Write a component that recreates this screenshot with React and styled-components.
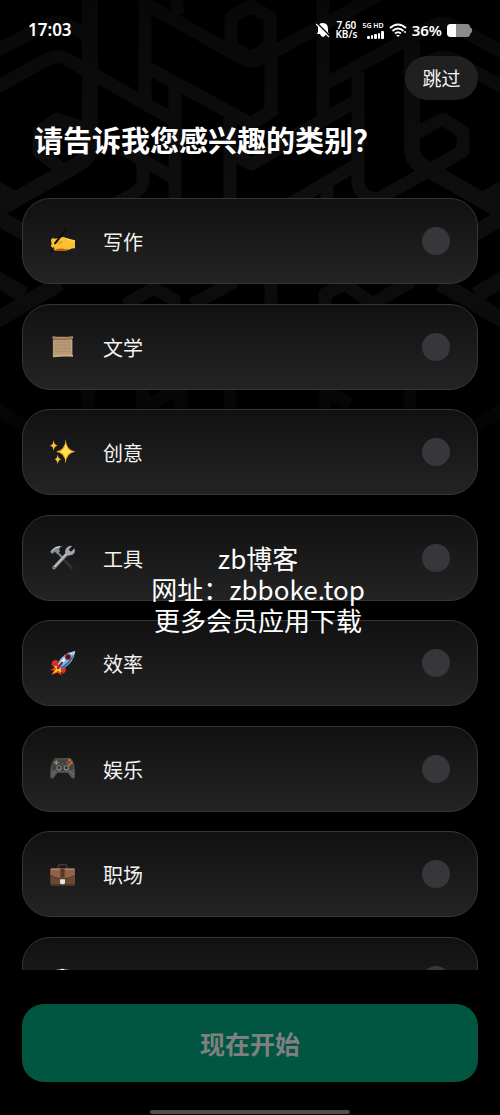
import React, { useState } from "react";
import styled, { createGlobalStyle } from "styled-components";

const GlobalStyle = createGlobalStyle`
  *, *::before, *::after { box-sizing: border-box; }
  body {
    margin: 0;
    background: #000;
    color: #fff;
    font-family: "Noto Sans CJK SC", "Noto Sans", sans-serif;
  }
`;

const Screen = styled.div`
  position: relative;
  isolation: isolate;
  display: flex;
  flex-direction: column;
  height: 100vh;
  overflow: hidden;
  background: #000;
`;

const Backdrop = styled.svg`
  position: absolute;
  z-index: -1;
  top: 0;
  left: 0;
  width: 100%;
  height: auto;
`;

const StatusBar = styled.header`
  display: flex;
  align-items: center;
  justify-content: space-between;
  height: 56px;
  padding: 4px 28px 0;
  flex: none;
  font-family: "Noto Sans", "Noto Sans CJK SC", sans-serif;
  font-weight: 600;
`;

const Clock = styled.time`
  font-size: 17px;
  line-height: 20px;
`;

const StatusGroup = styled.div`
  display: flex;
  align-items: center;
  gap: 5px;
`;

const NetSpeed = styled.div`
  display: flex;
  flex-direction: column;
  align-items: center;
  font-size: 10px;
  line-height: 9px;
`;

const Signal = styled.div`
  display: flex;
  flex-direction: column;
  align-items: flex-end;
  gap: 1px;
  font-size: 7px;
  line-height: 8px;
`;

const Percent = styled.span`
  font-size: 15px;
  line-height: 20px;
`;

const Main = styled.main`
  display: flex;
  flex: 1;
  flex-direction: column;
  min-height: 0;
  padding: 0 22px;
`;

const SkipButton = styled.button`
  align-self: flex-end;
  flex: none;
  width: 73px;
  height: 44px;
  padding: 0;
  border: 0;
  border-radius: 22px;
  background: #202020;
  color: #f4f4f4;
  font: inherit;
  font-size: 19px;
  line-height: 28px;
  cursor: pointer;
`;

const Title = styled.h1`
  flex: none;
  margin: 19px 12px 39px;
  font-size: 29px;
  line-height: 40px;
  font-weight: 700;
`;

const Scroller = styled.div`
  flex: 1;
  min-height: 0;
  overflow-y: auto;
  scrollbar-width: none;
`;

const CategoryList = styled.ul`
  display: flex;
  flex-direction: column;
  justify-content: space-between;
  min-height: 825px;
  margin: 0;
  padding: 0;
  list-style: none;
`;

const CategoryCard = styled.label`
  display: flex;
  align-items: center;
  gap: 27px;
  height: 86px;
  padding: 0 27px;
  border: 1px solid #363636;
  border-radius: 28px;
  background: linear-gradient(#111, #232323);
  color: #f2f2f2;
  font-size: 20px;
  line-height: 30px;
  cursor: pointer;
`;

const CategoryIcon = styled.svg`
  width: 26px;
  height: 26px;
  flex: none;
`;

const CategoryName = styled.span`
  flex: 1;
  padding-top: 2px;
`;

const RoundCheck = styled.input`
  appearance: none;
  flex: none;
  width: 28px;
  height: 28px;
  margin: 0;
  border-radius: 50%;
  background: #37363b;
  cursor: pointer;

  &:checked { background: #00a67e; }
`;

const Footer = styled.footer`
  display: flex;
  flex: none;
  flex-direction: column;
  align-items: center;
  padding: 34px 22px 1px;
`;

const StartButton = styled.button`
  width: 100%;
  height: 78px;
  margin-bottom: 28px;
  padding: 0;
  border: 0;
  border-radius: 22px;
  background: #005640;
  color: #808080;
  font: inherit;
  font-size: 25px;
  line-height: 36px;
  font-weight: 700;
`;

const HomeIndicator = styled.div`
  width: 44%;
  height: 4px;
  border-radius: 2px;
  background: #4e4e4e;
`;

const Watermark = styled.div`
  position: absolute;
  top: 542px;
  right: 0;
  left: 0;
  display: flex;
  flex-direction: column;
  align-items: center;
  padding-left: 16px;
  color: #fff;
  font-size: 26px;
  line-height: 31px;
  pointer-events: none;
`;

function Pattern() {
  return (
    <Backdrop viewBox="0 0 500 480" fill="none" aria-hidden="true">
      <defs>
        <linearGradient id="fade" gradientUnits="userSpaceOnUse" x1="0" y1="0" x2="0" y2="480">
          <stop offset="0" stopColor="#080808" />
          <stop offset="0.4" stopColor="#0e0e0e" />
          <stop offset="0.62" stopColor="#0c0c0c" />
          <stop offset="0.86" stopColor="#050505" />
          <stop offset="1" stopColor="#000" />
        </linearGradient>
      </defs>
      <g stroke="url(#fade)" strokeWidth="16">
        <path d="M90-10V146Q90 156 80 163L-10 214" />
        <path d="M412 42V148Q412 160 422 166L510 216" />
        <path d="M-10 185L12 198M510 185L486 198M-10 213L60 253M510 213L440 253M-10 324L60 283M510 324L440 283" />
        <path d="M-10 275L24 295M510 275L476 295" />
      </g>
      <g stroke="url(#fade)" strokeWidth="13" strokeLinejoin="round">
        <path d="M-10 54L46 25Q57 19 68 25L88 36" />
        <path d="M-10 91L46 60Q57 53 68 60L176 121" />
        <path d="M323 85L432 26Q443 20 454 26L510 56" />
        <path d="M405 77L432 60Q443 54 454 60L510 91" />
        <path d="M145-10V106" />
        <path d="M177-10V14M175 86V205" />
        <path d="M148 5L242 58Q251 64 262 58L395-14" />
        <path d="M251 6L270 17V46L251 58L231 46V17Z" />
        <path d="M148 68L251 124L276 108M271 55V112M323-10V124M274 148L358 100" />
        <path d="M230 117V205M229 151L251 164L290 142" />
        <path d="M358 72V184Q361 198 378 199L430 170L463 151V132L443 119L418 132" />
        <path d="M84 128L57 119L39 132V152L62 169" />
        <path d="M123 149L176 179M143 160V181Q143 188 133 194L95 216" />
        <path d="M288 205L358 164M327 183V205" />
        <path d="M125 305L154 288L174 300V320M192 305L235 281M271 281V320M325 320V294L345 284L372 304L412 281" />
        <path d="M88 380V420M143 380V420M150 404L181 388V420M230 380V420M325 380V420M330 392L350 404M410 380V420M-10 405L30 430M510 405L470 430" />
      </g>
    </Backdrop>
  );
}

function WritingHand() {
  return (
    <>
      <path d="M3 37C3 31 9 29 15 32L29 30Q40 23 49 31L61 35Q71 36 75 37V61Q65 61 57 65Q42 70 29 66Q16 71 13 65Q5 65 7 58Q0 55 5 48Z" fill="#fbc02f" />
      <path d="M15 47Q28 40 37 42Q29 46 24 51" fill="none" stroke="#d98a1c" strokeWidth="2" />
      <path d="M13 66Q24 60 32 62Q41 61 45 64Q56 63 59 65Q41 71 29 68Q18 70 13 66Z" fill="#b95d14" />
      <path d="M49 32Q61 36 74 39" fill="none" stroke="#ffd75c" strokeWidth="4" />
      <path d="M48 5L15 46" stroke="#0c0e10" strokeWidth="6" strokeLinecap="round" />
      <path d="M11 60L2 72" stroke="#0c0e10" strokeWidth="4" strokeLinecap="round" />
    </>
  );
}

function Scroll() {
  return (
    <>
      <path d="M10 12H66V64H10Z" fill="#b99a74" />
      <path d="M14 25H62M14 34H62M14 43H62M14 52H62" stroke="#a5855f" strokeWidth="2" strokeDasharray="12 2 7 1" />
      <path d="M7 7Q38 10 69 7V14Q39 18 8 15Z" fill="#ae8d68" />
      <path d="M8 15Q39 18 66 14" fill="none" stroke="#5f4630" strokeWidth="2" />
      <path d="M8 64Q38 61 69 62V68Q39 66 9 70Z" fill="#cdb087" />
      <path d="M10 17V63M66 17V62" stroke="#dec29a" strokeWidth="2" />
    </>
  );
}

function Sparkles() {
  return (
    <>
      <path d="M47 1Q49 34 76 38Q49 41 47 74Q45 41 18 38Q45 34 47 1Z" fill="#f1ae24" />
      <path d="M47 13Q50 34 66 38Q50 41 47 62Q44 41 29 38Q44 35 47 13Z" fill="#ffe34f" />
      <path d="M11 3Q12 18 23 20Q12 21 11 36Q10 21 0 20Q10 18 11 3ZM23 46Q24 59 34 61Q24 63 23 77Q22 63 13 61Q22 59 23 46Z" fill="#f5c636" />
    </>
  );
}

function Tools() {
  return (
    <>
      <path d="M20 22L65 69" stroke="#2f3032" strokeWidth="9" strokeLinecap="round" />
      <path d="M21 21L42 42" stroke="#8e9498" strokeWidth="5" />
      <path d="M2 19Q15 0 38 4Q28 7 27 13L30 19L22 27L15 20L6 27L0 20Z" fill="#868d93" />
      <path d="M5 18Q17 5 30 5" fill="none" stroke="#d4dadd" strokeWidth="3" />
      <path d="M12 68L53 24" stroke="#878d92" strokeWidth="10" strokeLinecap="round" />
      <path d="M13 66L54 22" stroke="#c3c9cd" strokeWidth="4" strokeLinecap="round" />
      <path d="M46 25Q42 8 60 2L66 3L56 14L63 20L74 10Q78 29 61 31L52 32Z" fill="#a2a8ad" />
      <circle cx="13" cy="67" r="2" fill="#30363a" />
    </>
  );
}

function Rocket() {
  return (
    <>
      <path d="M18 44L3 42L13 53L0 60L13 62L3 75L23 68L34 76L34 65L43 60L31 47Z" fill="#f23b16" />
      <path d="M21 49L13 47L18 57L7 72L25 62L33 68L35 57Z" fill="#ffc727" />
      <path d="M25 32Q11 26 4 40L21 47ZM47 52Q51 66 38 72L32 56Z" fill="#df2d27" />
      <path d="M22 43Q37 8 75 4Q72 42 34 58Z" fill="#81b8df" />
      <path d="M27 42Q43 13 72 7Q51 22 32 48Z" fill="#dbf3ff" />
      <path d="M34 57Q65 41 74 7Q61 36 31 53Z" fill="#28699b" />
      <path d="M63 7Q70 4 76 4L72 17Z" fill="#a6d2eb" />
      <circle cx="54" cy="21" r="10" fill="#bd2b35" />
      <circle cx="54" cy="21" r="6" fill="#202436" />
      <path d="M36 38L24 54" stroke="#9d1f29" strokeWidth="7" strokeLinecap="round" />
    </>
  );
}

function Gamepad() {
  return (
    <>
      <path d="M13 8Q21 4 29 7H47Q58 3 64 9Q75 20 75 63Q72 71 65 66L53 50H23L10 67Q1 72 1 60Q0 23 13 8Z" fill="#555954" />
      <path d="M14 10Q20 7 29 11H47Q57 7 63 12Q69 20 70 37L60 45H16L5 38Q7 18 14 10Z" fill="#40443f" />
      <path d="M5 56L18 43M71 56L57 43" stroke="#787c75" strokeWidth="3" />
      <path d="M12 20H27M19 13V27" stroke="#8c918a" strokeWidth="4" />
      <circle cx="27" cy="36" r="8" fill="#858b83" />
      <circle cx="49" cy="36" r="8" fill="#858b83" />
      <circle cx="27" cy="35" r="5" fill="#353934" />
      <circle cx="49" cy="35" r="5" fill="#353934" />
      <g fill="#e0602f">
        <circle cx="58" cy="13" r="4" />
        <circle cx="64" cy="20" r="4" />
        <circle cx="51" cy="20" r="3" fill="#9a5238" />
        <circle cx="58" cy="26" r="4" />
      </g>
      <circle cx="38" cy="24" r="2" fill="#d54b35" />
    </>
  );
}

function Briefcase() {
  return (
    <>
      <path d="M25 25V15Q26 11 32 11H44Q50 11 51 15V25" fill="none" stroke="#573a2b" strokeWidth="4" />
      <rect x="1" y="22" width="74" height="52" rx="4" fill="#6b4835" />
      <path d="M1 27Q1 22 6 22H70Q75 22 75 27V42Q58 52 38 52Q17 51 1 42Z" fill="#916449" />
      <path d="M2 43Q18 54 38 54Q59 53 74 43" fill="none" stroke="#4d3326" strokeWidth="2" />
      <path d="M4 25H72" stroke="#b2896c" strokeWidth="3" />
      <path d="M31 23H44V50H31Z" fill="#59382a" />
      <path d="M30 55H45V67Q38 75 30 67Z" fill="#e7e5df" />
      <path d="M2 72H74" stroke="#3d291f" strokeWidth="3" />
    </>
  );
}

function ChefHat() {
  return (
    <>
      <path d="M12 42Q0 16 18 9Q24 7 28 8Q37 2 46 8Q56 6 62 14Q74 30 62 44V72H17Z" fill="#f4f4f4" />
      <path d="M18 60H61M30 32V57M48 32V57" stroke="#bdbdbd" strokeWidth="3" />
    </>
  );
}

const categories = [
  { id: "writing", name: "写作", Icon: WritingHand },
  { id: "literature", name: "文学", Icon: Scroll },
  { id: "creative", name: "创意", Icon: Sparkles },
  { id: "tools", name: "工具", Icon: Tools },
  { id: "efficiency", name: "效率", Icon: Rocket },
  { id: "fun", name: "娱乐", Icon: Gamepad },
  { id: "career", name: "职场", Icon: Briefcase },
  { id: "food", name: "美食", Icon: ChefHat },
];

function StatusIcons() {
  return (
    <StatusGroup>
      <svg width="14" height="16" viewBox="0 0 14 16" aria-hidden="true">
        <path d="M7 1Q12 1 12 7V10L13 12H1L2 10V6Q2 1 7 1ZM4 12H10Q9 15 7 15T4 12Z" fill="#fff" />
        <path d="M1 1L14 14" stroke="#000" strokeWidth="1.5" />
        <path d="M0 2L13 15" stroke="#fff" strokeWidth="1.2" />
      </svg>
      <NetSpeed>
        <span>7.60</span>
        <span>KB/s</span>
      </NetSpeed>
      <Signal>
        5G HD
        <svg width="17" height="8" viewBox="0 0 17 8" fill="#fff" aria-hidden="true">
          <rect x="0" y="5" width="3" height="3" rx="1" />
          <rect x="4" y="4" width="2" height="4" rx="1" />
          <rect x="7" y="3" width="3" height="5" rx="1" />
          <rect x="11" y="2" width="2" height="6" rx="1" />
          <rect x="14" y="0" width="3" height="8" rx="1" />
        </svg>
      </Signal>
      <svg width="18" height="14" viewBox="0 0 18 14" fill="none" stroke="#fff" strokeWidth="2" aria-hidden="true">
        <path d="M1 5Q9-2 17 5M3.5 8Q9 3 14.5 8M6 10.5Q9 8 12 10.5" />
        <path d="M7 12L9 14L11 12Z" fill="#fff" stroke="none" />
        <circle cx="16" cy="9" r="1" fill="#fff" stroke="none" />
      </svg>
      <Percent>36%</Percent>
      <svg width="25" height="13" viewBox="0 0 25 13" aria-hidden="true">
        <path d="M4 0H20Q23 0 23 3L25 5V8L23 10Q23 13 20 13H4Q0 13 0 9V4Q0 0 4 0Z" fill="#8b8b8b" />
        <path d="M9 0H4Q0 0 0 4V9Q0 13 4 13H9Z" fill="#fff" />
      </svg>
    </StatusGroup>
  );
}

export default function App() {
  const [selected, setSelected] = useState([]);

  const toggle = (id) =>
    setSelected((list) => (list.includes(id) ? list.filter((x) => x !== id) : [...list, id]));

  return (
    <>
      <GlobalStyle />
      <Screen>
        <Pattern />
        <StatusBar>
          <Clock>17:03</Clock>
          <StatusIcons />
        </StatusBar>
        <Main>
          <SkipButton type="button">跳过</SkipButton>
          <Title>请告诉我您感兴趣的类别？</Title>
          <Scroller>
            <CategoryList>
              {categories.map(({ id, name, Icon }) => (
                <li key={id}>
                  <CategoryCard htmlFor={id}>
                    <CategoryIcon viewBox="0 0 78 78" aria-hidden="true">
                      <Icon />
                    </CategoryIcon>
                    <CategoryName>{name}</CategoryName>
                    <RoundCheck
                      id={id}
                      type="checkbox"
                      checked={selected.includes(id)}
                      onChange={() => toggle(id)}
                    />
                  </CategoryCard>
                </li>
              ))}
            </CategoryList>
          </Scroller>
        </Main>
        <Footer>
          <StartButton type="button">现在开始</StartButton>
          <HomeIndicator />
        </Footer>
        <Watermark>
          <span>zb博客</span>
          <span>网址：zbboke.top</span>
          <span>更多会员应用下载</span>
        </Watermark>
      </Screen>
    </>
  );
}
